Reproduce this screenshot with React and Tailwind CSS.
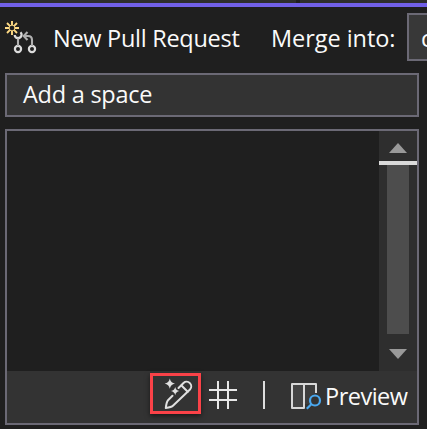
function PullRequestIcon() {
  return (
    <svg width="36" height="36" viewBox="0 0 36 36" fill="none" className="shrink-0">
      <g stroke="#ffdb85" strokeWidth="1.9">
        <circle cx="8" cy="10" r="2.9" strokeWidth="1" />
        <path d="M8 3v4M8 13v4M1 10h4M11 10h4M3 5l2.8 2.8M10.2 12.2L13 15M3 15l2.8-2.8M10.2 7.8L13 5" />
      </g>
      <g stroke="#dcdcdc" strokeWidth="2.2">
        <circle cx="14" cy="31" r="3.1" />
        <circle cx="28" cy="31" r="3.1" />
        <path d="M10.700 17a3.400 3.400 0 0 0 3.300 3.200a3.500 3.500 0 0 0 2.500-6" />
      </g>
      <path d="M14 28v-7.500M28 28v-6q0-4-4-4h-4M23.500 14L19.700 18l3.800 4" stroke="#b0b0b0" strokeWidth="2.1" />
    </svg>
  );
}

function EditIcon() {
  return (
    <svg width="31" height="31" viewBox="0 0 31 31" className="shrink-0 overflow-visible" fill="none">
      <g stroke="#e0e0e0" strokeWidth="2" strokeLinejoin="round" strokeLinecap="round">
        <path d="M12.500 17.800L8 22.300Q6.500 23.800 5.800 30Q11.500 29.200 13.200 27.500L30 11.500A4.600 4.600 0 0 0 23.500 5L18.500 10" />
        <path d="M21.500 7.500l6.200 6.200" />
      </g>
      <path fill="#e0e0e0" d="M9.800 0.500Q10.700 4.800 15 5.500Q10.700 6.300 9.800 10.800Q8.900 6.300 4.700 5.500Q8.900 4.800 9.800 .5ZM15.200 9Q15.900 12.400 19.300 13Q15.900 13.700 15.200 17.200Q14.500 13.700 11 13Q14.500 12.400 15.200 9Z" />
    </svg>
  );
}

function PreviewIcon() {
  return (
    <svg width="31" height="28" viewBox="0 0 31 28" fill="none" className="shrink-0">
      <path d="M1 2h12v22H1z" fill="#454545" />
      <path d="M14 2h11v8q-7 2-5 8l-2 3h-4z" fill="#3d3d3d" />
      <path d="M25 10V1H1v24h12V1" stroke="#d8d8d8" strokeWidth="2" strokeLinejoin="round" />
      <circle cx="24" cy="17.500" r="5" stroke="#4aa8ef" strokeWidth="2.200" />
      <path d="M20.300 21.200l-4.500 4.500" stroke="#4aa8ef" strokeWidth="2.200" />
    </svg>
  );
}

export default function App() {
  return (
    <div className="h-[429px] w-[427px] overflow-hidden bg-[#1f1f1f] font-['Open_Sans','Noto_Sans',sans-serif] text-[23.5px] leading-8 text-[#fafafa]">
      <div className="flex h-[3px] bg-[#2e2e2e]">
        <div className="ml-[296px] w-1 bg-[#1f1f1f]" />
      </div>
      <div className="h-1 bg-[#7160e8]" />

      <header className="flex h-[66px] whitespace-nowrap pl-1 pt-1.5">
        <div className="pt-[5px]"><PullRequestIcon /></div>
        <span className="ml-[13px] w-[218px] shrink-0 pt-[9px] tracking-[-0.28px]">New Pull Request</span>
        <span className="w-[136px] shrink-0 pt-[9px] tracking-[-0.05px]">Merge into:</span>
        <div className="h-12 w-20 shrink-0 border-2 border-[#6b6975] bg-[#383838] pl-3 pt-[7px]">c</div>
      </header>

      <div className="ml-[5px] flex h-11 w-[414px] items-start border-2 border-[#6b6975] bg-[#333333] pl-4 pt-[3px]">
        <span className="tracking-[-0.25px]">Add a space</span>
      </div>

      <div className="ml-[5px] mt-3 flex h-[296px] w-[414px] flex-col border-2 border-[#6b6975]">
        <div className="flex h-60 shrink-0">
          <div className="flex-1 bg-[#1f1f1f]" />
          <div className="flex w-[38px] flex-col items-center bg-[#2e2e2e]">
            <svg width="18" height="10" viewBox="0 0 18 10" className="mt-3 shrink-0">
              <path d="M9 0l9 10H0z" fill="#999" />
            </svg>
            <div className="mt-2 h-1 w-full shrink-0 bg-[#dadada]" />
            <div className="h-[169px] w-[22px] shrink-0 bg-[#4d4d4d]" />
            <svg width="18" height="10" viewBox="0 0 18 10" className="mt-[15px] shrink-0">
              <path d="M0 0h18l-9 10z" fill="#999" />
            </svg>
          </div>
        </div>
        <div className="flex flex-1 bg-[#333333] pl-[143px]">
          <div className="mt-0.5 flex h-[41px] w-[51px] shrink-0 items-center justify-center border-[3px] border-[#fa4248] shadow-[0_2px_5px_rgba(0,0,0,0.55)]">
            <EditIcon />
          </div>
          <svg width="28" height="28" viewBox="0 0 28 28" className="ml-2 mt-2.5 shrink-0">
            <path d="M9 0v28M19 0v28M0 9h28M0 19h28" stroke="#e8e8e8" strokeWidth="2" />
          </svg>
          <div className="ml-[26px] mt-2.5 h-7 w-0.5 shrink-0 bg-[#dedede]" />
          <div className="ml-[26px] mt-3"><PreviewIcon /></div>
          <span className="ml-[3px] mt-[9px] tracking-[-0.5px]">Preview</span>
        </div>
      </div>
    </div>
  );
}
